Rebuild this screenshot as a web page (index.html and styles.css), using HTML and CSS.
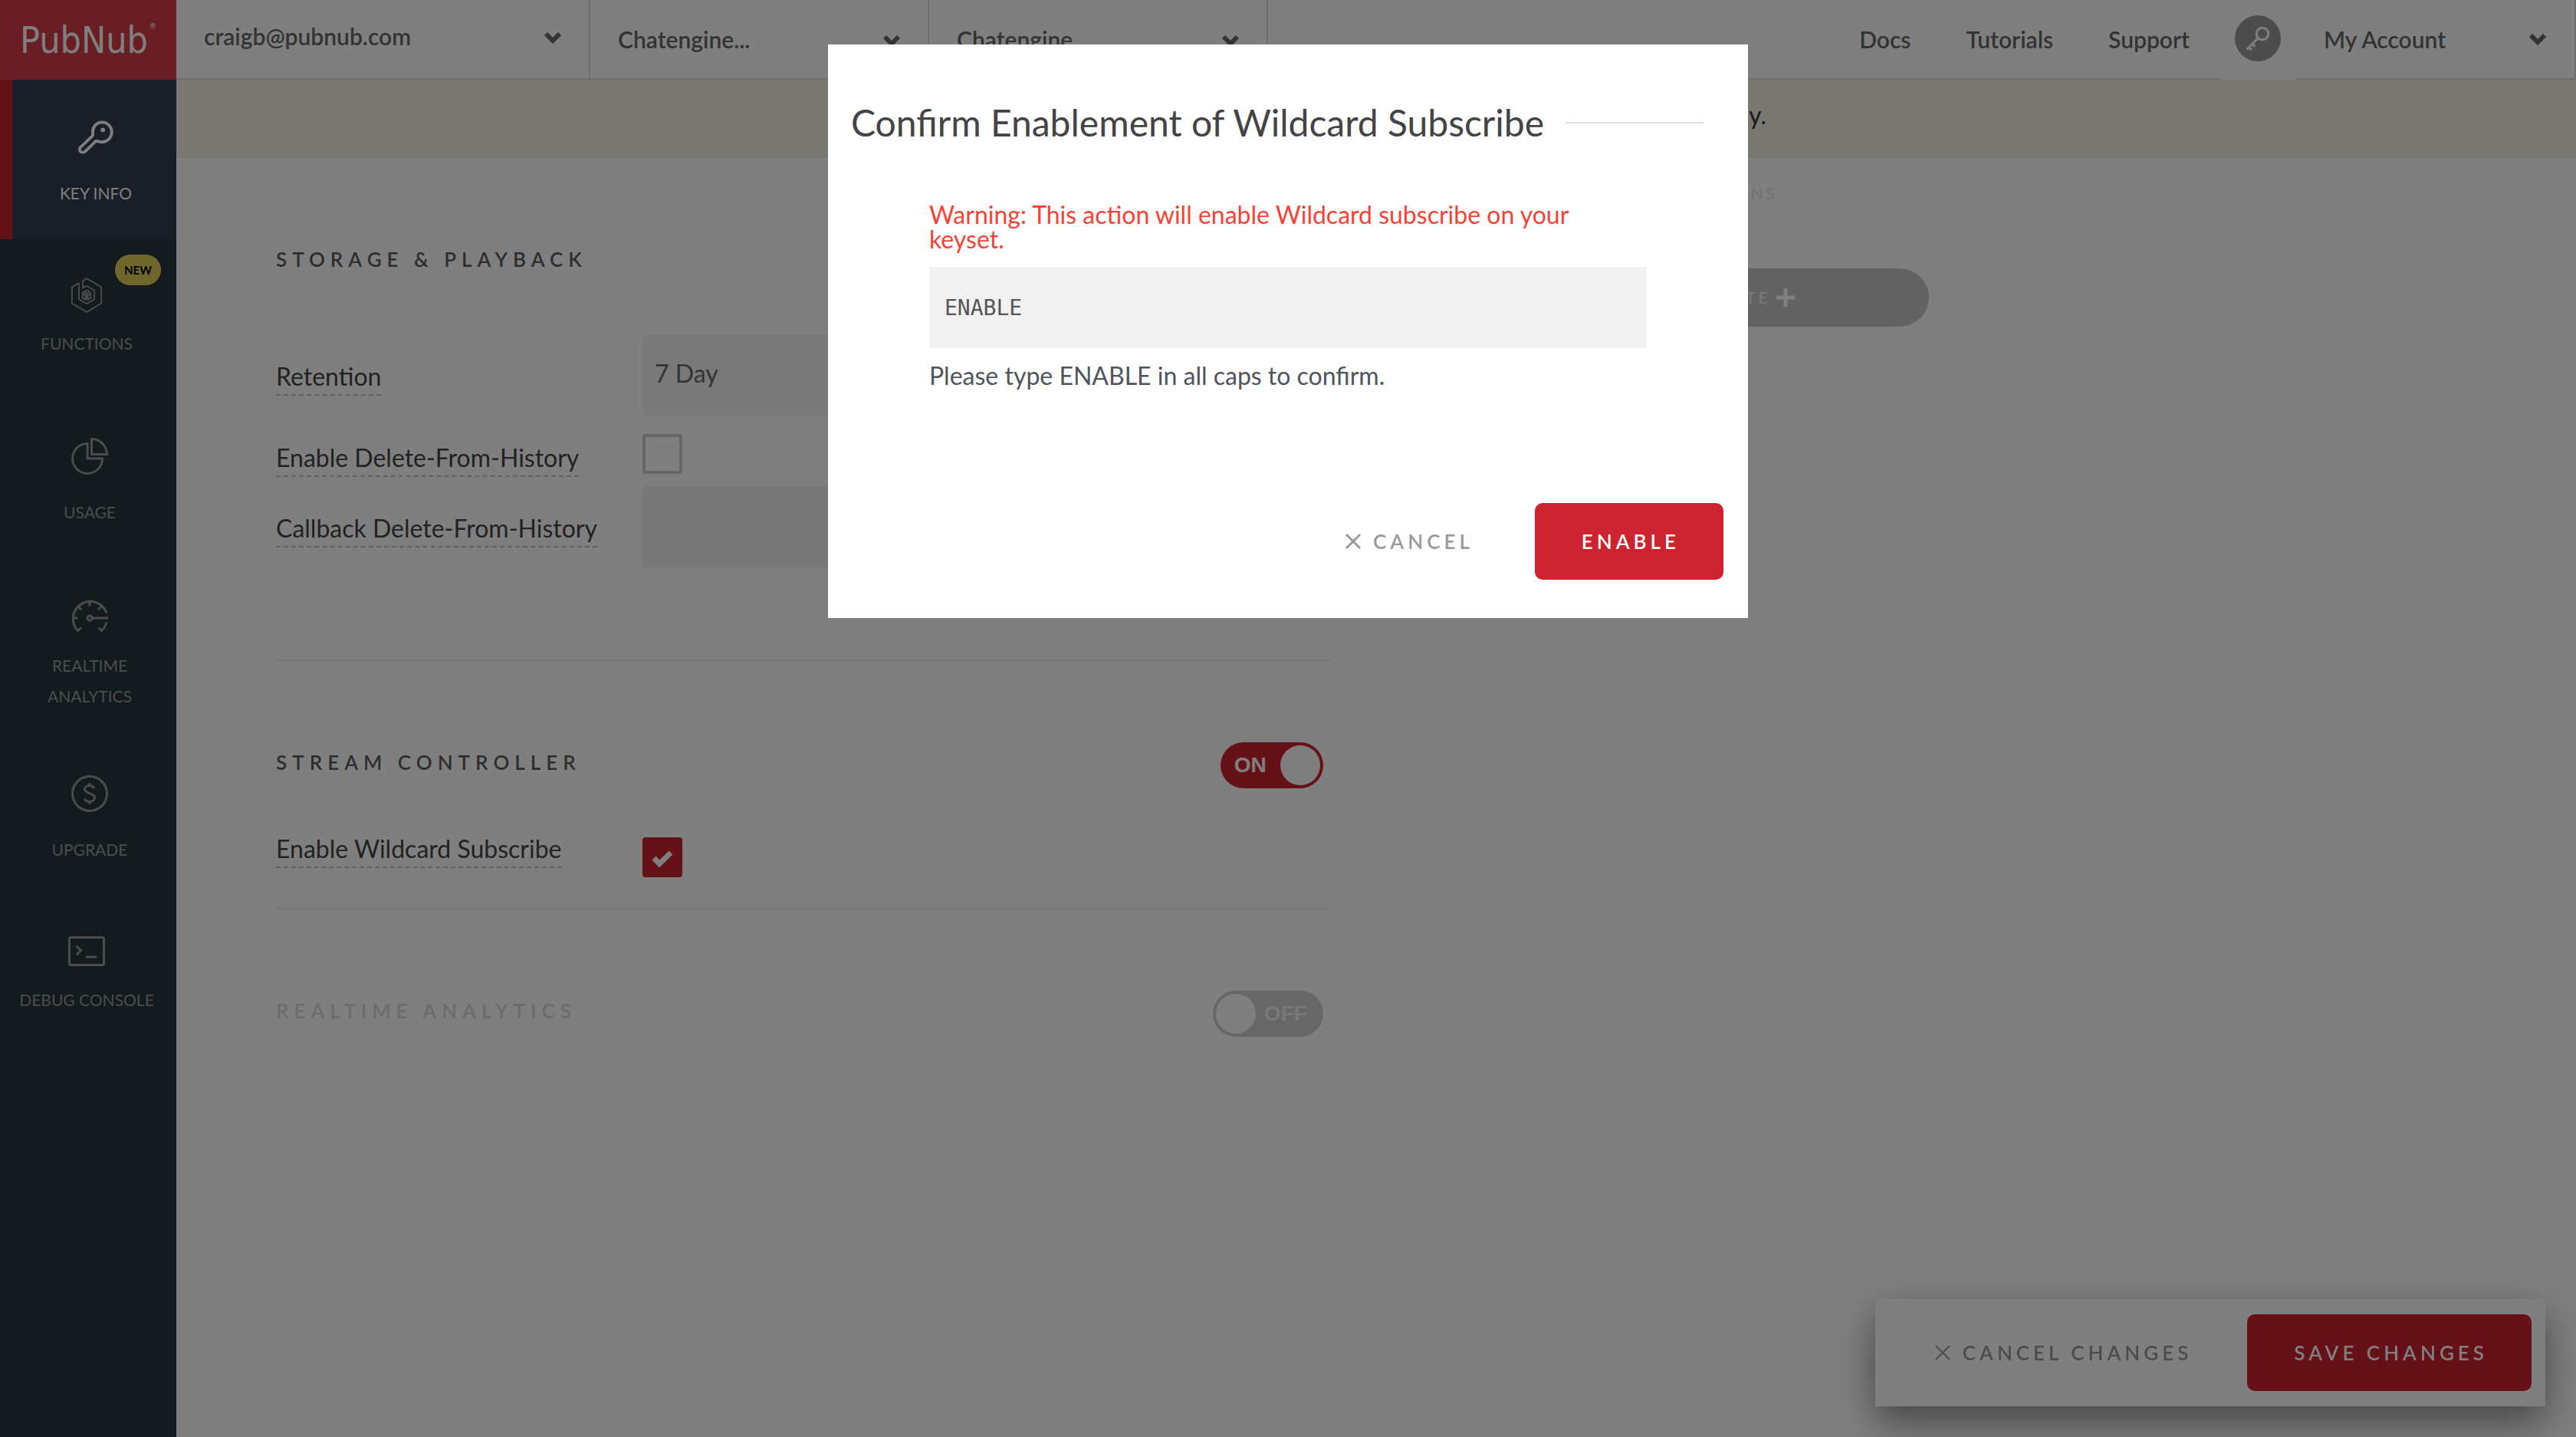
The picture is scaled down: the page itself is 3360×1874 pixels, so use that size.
FILE: index.html
```
<!DOCTYPE html>
<html lang="en">
<head>
<meta charset="utf-8">
<meta name="viewport" content="width=device-width, initial-scale=1">
<title>PubNub Admin – Key Info</title>
<link rel="stylesheet" href="styles.css">
</head>
<body>
<div class="app">
  <nav class="sidebar" aria-label="Primary">
    <a class="logo" href="#">PubNub<sup>®</sup></a>
    <a class="side-item side-item--active" href="#">
      <svg class="side-icon" viewBox="0 0 50 48" fill="none" stroke="currentColor" stroke-width="4" stroke-linejoin="round"><path d="M33 3.500a13.500 13.500 0 1 1-5 26l-3-.3L10.500 43.300c-1.500 1.500-5.500 1.500-6.500 0-1.500-1.500-1.500-4 0-5.500L20.500 22c.8-1 .3-3 .3-5A13 13 0 0 1 33 3.500z"/><ellipse cx="34.500" cy="14" rx="3" ry="3" fill="currentColor" stroke="none"/></svg>
      <span class="side-label">KEY INFO</span>
    </a>
    <a class="side-item side-item--compact" href="#">
      <span class="badge">NEW</span>
      <svg class="side-icon" viewBox="0 0 50 48" fill="none" stroke="currentColor" stroke-width="2"><path d="M14.500 7.500 5 13v22l20 11.700L45 35V13L25 1.200l-5 3V14l5-2.500 10.500 6v12L25 35.500l-10.500-6V7.500"/><path d="M25 17l-4 2.500 4 2.500 4-2.500zM25 22v7.500M19.500 21.500v6l4 2.500v-5.500zM30.500 21.500v6l-4 2.500v-5.500z"/></svg>
      <span class="side-label">FUNCTIONS</span>
    </a>
    <a class="side-item" href="#">
      <svg class="side-icon" viewBox="0 0 48 48" fill="none" stroke="currentColor" stroke-width="3"><path d="M21 7.500A19.500 19.500 0 1 0 40.500 27H21z"/><path d="M26.500 1.500v20h20a20 20 0 0 0-20-20z"/></svg>
      <span class="side-label">USAGE</span>
    </a>
    <a class="side-item side-item--tall" href="#">
      <svg class="side-icon" viewBox="0 0 48 48" fill="none" stroke="currentColor" stroke-width="3"><path d="M13 39.500 8.500 43.500A22.500 22.500 0 1 1 46 20.500M46 32.500a22.500 22.500 0 0 1-6.500 11L35.500 39.500M24 4.500v7M8.500 11.500l4.500 4.500M39.500 11.500 35 16M1.500 27H8M28 27h20"/><circle cx="24" cy="27" r="3"/></svg>
      <span class="side-label">REALTIME<br>ANALYTICS</span>
    </a>
    <a class="side-item" href="#">
      <svg class="side-icon" viewBox="0 0 48 48" fill="none" stroke="currentColor" stroke-width="3"><circle cx="24" cy="24" r="22.500"/><path d="M30 17c-1.500-2.500-4-3.500-6.500-3.500-3.500 0-6 2-6 4.800 0 6.500 13 4 13 11.200 0 3-3 5-6.500 5-3 0-5.500-1.300-7-4M24 10v4M24 34v4"/></svg>
      <span class="side-label">UPGRADE</span>
    </a>
    <a class="side-item side-item--compact" href="#">
      <svg class="side-icon" viewBox="0 0 48 48" fill="none" stroke="currentColor" stroke-width="3"><rect x="1.500" y="5.500" width="45" height="36" rx="2"/><path d="M10.500 16.500 16.500 22.500l-6 6M23 31h14"/></svg>
      <span class="side-label">DEBUG CONSOLE</span>
    </a>
  </nav>

  <div class="page">
    <header class="topbar">
      <div class="picker picker--account">
        <select class="picker-select" aria-label="Account"><option>craigb@pubnub.com</option></select>
        <svg class="chevron" viewBox="0 0 22 14"><path d="M2 2l9 9 9-9"/></svg>
      </div>
      <div class="picker">
        <select class="picker-select" aria-label="App"><option>Chatengine...</option></select>
        <svg class="chevron" viewBox="0 0 22 14"><path d="M2 2l9 9 9-9"/></svg>
      </div>
      <div class="picker">
        <select class="picker-select" aria-label="Keyset"><option>Chatengine</option></select>
        <svg class="chevron" viewBox="0 0 22 14"><path d="M2 2l9 9 9-9"/></svg>
      </div>
      <nav class="links" aria-label="Help">
        <a href="#">Docs</a>
        <a href="#">Tutorials</a>
        <a href="#">Support</a>
      </nav>
      <a class="key-link" href="#" aria-label="Keys">
        <svg class="key-icon" viewBox="0 0 60 60" fill="none" stroke="#fff" stroke-width="3"><circle class="key-disc" cx="30" cy="30" r="30"/><circle cx="36" cy="24" r="7.800"/><path d="M30 30 15.500 44.500M18.500 42l3.500 3M23 37.500l3.500 3"/></svg>
      </a>
      <button class="account" type="button">My Account
        <svg class="chevron" viewBox="0 0 22 14"><path d="M2 2l9 9 9-9"/></svg>
      </button>
    </header>

    <div class="banner"><p>today.</p></div>

    <main class="content">
      <form class="settings">
        <section class="section section--first">
          <div class="section-head"><h2>STORAGE &amp; PLAYBACK</h2></div>
          <div class="field">
            <label for="retention">Retention</label>
            <select id="retention" class="box box--select"><option>7 Day</option></select>
          </div>
          <div class="field field--check">
            <label for="delete">Enable Delete-From-History</label>
            <span class="tick"><input id="delete" type="checkbox"></span>
          </div>
          <div class="field">
            <label for="callback">Callback Delete-From-History</label>
            <input id="callback" class="box" type="text">
          </div>
        </section>
        <section class="section section--stream">
          <div class="section-head">
            <h2>STREAM CONTROLLER</h2>
            <label class="switch switch--on">ON<input type="checkbox" role="switch" checked></label>
          </div>
          <div class="field field--wildcard">
            <label for="wildcard">Enable Wildcard Subscribe</label>
            <span class="tick"><input id="wildcard" type="checkbox" checked><svg viewBox="0 0 52 52"><path d="M15 27l7 7.500L37 20"/></svg></span>
          </div>
        </section>
        <section class="section section--off">
          <div class="section-head">
            <h2>REALTIME ANALYTICS</h2>
            <label class="switch"><input type="checkbox" role="switch">OFF</label>
          </div>
        </section>
      </form>
      <aside class="options">
        <h3>OPTIONS</h3>
        <button class="create" type="button">CREATE<svg viewBox="0 0 24 24"><path d="M12 0v24M0 12h24"/></svg></button>
      </aside>
    </main>
  </div>
</div>

<div class="savebar">
  <button class="btn btn--plain" type="button"><svg class="cross cross--thin" viewBox="0 0 20 20"><path d="M1 1l18 18M19 1 1 19"/></svg>CANCEL CHANGES</button>
  <button class="btn btn--primary" type="button">SAVE CHANGES</button>
</div>

<div class="overlay">
  <form class="modal" role="dialog" aria-modal="true" aria-labelledby="modal-title">
    <h1 class="modal-title" id="modal-title">Confirm Enablement of Wildcard Subscribe</h1>
    <div class="modal-body">
      <p class="warning">Warning: This action will enable Wildcard subscribe on your keyset.</p>
      <input id="confirm" class="confirm" type="text" value="ENABLE">
      <label class="hint" for="confirm">Please type ENABLE in all caps to confirm.</label>
    </div>
    <div class="modal-actions">
      <button class="btn btn--plain" type="button"><svg class="cross" viewBox="0 0 20 20"><path d="M1 1l18 18M19 1 1 19"/></svg>CANCEL</button>
      <button class="btn btn--primary" type="button">ENABLE</button>
    </div>
  </form>
</div>
</body>
</html>
```
FILE: styles.css
```
* { box-sizing: border-box; }

body {
  margin: 0;
  background: #fff;
  color: #444;
  font: 32px/40px Lato, "Open Sans", sans-serif;
}

h1, h2, h3, p { margin: 0; font-weight: 400; }
a { color: inherit; text-decoration: none; }
button, input, select { margin: 0; border: 0; font: inherit; color: inherit; }
select, input { appearance: none; border-radius: 0; }
button { background: none; cursor: pointer; }
svg { display: block; overflow: visible; }

.app { display: flex; min-height: 100vh; }
.page { flex: 1; min-width: 0; }

/* Sidebar */
.sidebar { width: 230px; background: #26363c; color: #999; }
.logo {
  display: flex;
  justify-content: center;
  height: 104px;
  background: #d43a44;
  color: #fff;
  font: 48px/104px "DejaVu Sans Condensed", "DejaVu Sans", sans-serif;
}
.logo sup { font-size: 10px; line-height: 70px; padding-left: 2px; }
.side-item {
  position: relative;
  display: flex;
  flex-direction: column;
  align-items: center;
  min-height: 208px;
  padding: 51px 0 30px 4px;
  border-bottom: 2px solid #2b3940;
}
.side-icon { width: 48px; height: 48px; flex: none; }
.side-label {
  margin-top: 29px;
  font-size: 21px;
  line-height: 40px;
  text-align: center;
}
.side-item--active {
  border-left: 16px solid #cc222c;
  border-bottom: 0;
  background: #343c4e;
  color: #fff;
}
.side-item--compact { padding: 49px 4px 30px 0; }
.side-item--compact .side-label { margin-top: 19px; }
.side-item--tall .side-label { margin-top: 21px; }
.badge {
  position: absolute;
  top: 20px;
  right: 20px;
  padding: 0 12px;
  border-radius: 20px;
  background: #e2cc56;
  color: #000;
  font-size: 15px;
  font-weight: 700;
  line-height: 40px;
}

/* Top bar */
.topbar {
  display: flex;
  align-items: stretch;
  height: 104px;
  border-bottom: 2px solid #dcdcdc;
  border-right: 2px solid #dcdcdc;
  color: #666;
  font-size: 30px;
  font-weight: 600;
}
.picker {
  display: grid;
  flex: 0 0 442px;
  align-items: center;
  border-right: 2px solid #dcdcdc;
}
.picker--account { flex-basis: 540px; padding-bottom: 8px; }
.picker-select {
  grid-area: 1 / 1;
  align-self: stretch;
  width: 100%;
  padding: 0 70px 0 36px;
  background: none;
}
.chevron {
  width: 22px;
  height: 14px;
  fill: none;
  stroke: #666;
  stroke-width: 6;
}
.picker .chevron { grid-area: 1 / 1; justify-self: end; margin: 4px 36px 0 0; }
.links { display: flex; align-items: center; gap: 72px; margin-left: auto; }
.key-link {
  display: grid;
  justify-items: center;
  align-content: center;
  width: 106px;
  margin: 0 33px -2px 36px;
  padding-bottom: 4px;
  border-radius: 0 0 8px 8px;
  background: #fff;
}
.key-icon { width: 60px; height: 60px; }
.key-disc { fill: #999; stroke: none; }
.account {
  display: flex;
  align-items: center;
  justify-content: space-between;
  width: 327px;
  padding: 0 37px 0 0;
  font-weight: 600;
}

.banner { padding: 26px 0 36px; background: #f2eee2; color: #333; }
.banner p { max-width: 1018px; margin: 0 auto; text-align: right; }

/* Settings */
.content { display: flex; padding: 0 134px 0 130px; }
.settings { flex: 0 0 48%; }
.section { border-bottom: 2px solid #ececec; }
.section--first { padding: 106px 0 120px; }
.section--stream { padding: 106px 0 40px; }
.section--off { padding: 106px 0; border: 0; }
.section-head { display: flex; justify-content: space-between; min-height: 60px; padding-right: 10px; }
.section-head h2 {
  margin-top: 10px;
  color: #5c5c5c;
  font-size: 26px;
  font-weight: 600;
  line-height: 32px;
  letter-spacing: 7px;
}
.section--off h2 { color: #d8d8d8; }
.section--first .section-head { min-height: 124px; }

.field { display: grid; grid-template-columns: 478px 1fr; align-items: start; }
.field label {
  justify-self: start;
  margin-top: 36px;
  padding-bottom: 4px;
  border-bottom: 2px dashed #c4c4c4;
  line-height: 38px;
}
.field--check { margin: 24px 0 12px; }
.field--check label { margin-top: 12px; }
.field--wildcard { margin-top: 59px; }
.field--wildcard label { margin-top: 1px; }
.field--wildcard .tick { margin-top: 5px; }
.box { width: 100%; height: 106px; padding: 0 16px 4px; background: #f0f0f0; }
.box--select { border-radius: 8px; background: #f3f3f3; color: #666; }

.tick { display: grid; width: 52px; height: 52px; }
.tick input { grid-area: 1 / 1; border: 4px solid #cecece; border-radius: 4px; }
.tick input:checked { border-color: #cd232e; background: #cd232e; }
.tick svg { grid-area: 1 / 1; fill: none; stroke: #fff; stroke-width: 7; }

.switch {
  display: flex;
  align-items: center;
  gap: 11px;
  height: 60px;
  padding: 0 21px 0 4px;
  border-radius: 30px;
  background: #cecece;
  color: #f0f0f0;
  font: bold 28px/60px "Liberation Sans", Arial, sans-serif;
}
.switch--on { gap: 18px; padding: 0 4px 0 18px; background: #cd232e; color: #fff; }
.switch input { width: 52px; height: 52px; border-radius: 50%; background: #fff; }

.options { width: 490px; margin-left: 290px; padding-top: 26px; }
.options h3 {
  padding-right: 197px;
  color: #e4e4e4;
  font-size: 21px;
  letter-spacing: 4px;
  text-align: right;
}
.create {
  display: flex;
  align-items: center;
  justify-content: center;
  gap: 7px;
  width: 100%;
  height: 76px;
  margin-top: 78px;
  padding-left: 14px;
  border-radius: 38px;
  background: #c6c6c6;
  color: #f0f0f0;
  font-size: 21px;
  font-weight: 600;
  letter-spacing: 4px;
}
.create svg { width: 24px; height: 24px; stroke: #fff; stroke-width: 5; }

/* Buttons */
.btn {
  display: flex;
  align-items: center;
  justify-content: center;
  height: 100px;
  padding: 0 57px 0 61px;
  border-radius: 10px;
  font-size: 26px;
  font-weight: 600;
  letter-spacing: 5px;
  white-space: nowrap;
}
.btn--primary { background: #cd232e; color: #fff; }
.btn--plain { gap: 16px; padding: 0 72px 0 60px; color: #999; }
.cross { width: 20px; height: 20px; fill: none; stroke: #999; stroke-width: 3; }
.cross--thin { stroke-width: 2; }

.savebar {
  position: fixed;
  right: 40px;
  bottom: 40px;
  display: flex;
  padding: 20px 18px;
  background: #fff;
  box-shadow: 0 20px 50px rgba(0, 0, 0, 0.45);
}

/* Modal */
.overlay { position: fixed; inset: 0; padding: 58px 0; background: rgba(0, 0, 0, 0.5); }
.modal { max-width: 1200px; margin: 0 auto; padding: 72px 32px 50px 30px; background: #fff; }
.modal-title {
  display: flex;
  align-items: center;
  gap: 28px;
  padding-right: 26px;
  font-size: 48px;
  line-height: 60px;
  white-space: nowrap;
}
.modal-title::after { content: ""; flex: 1; height: 2px; background: #ddd; }
.modal-body { display: flex; flex-direction: column; margin: 74px 100px 146px 102px; }
.warning { color: #f44336; line-height: 32px; }
.confirm {
  width: 100%;
  height: 106px;
  margin: 20px 0 16px;
  padding: 0 20px;
  background: #f1f1f1;
  color: #555;
  font: 28px "DejaVu Sans Mono", monospace;
}
.hint { color: #4e555c; }
.modal-actions { display: flex; justify-content: flex-end; }
.modal-actions .btn--plain { padding-right: 80px; }
```
